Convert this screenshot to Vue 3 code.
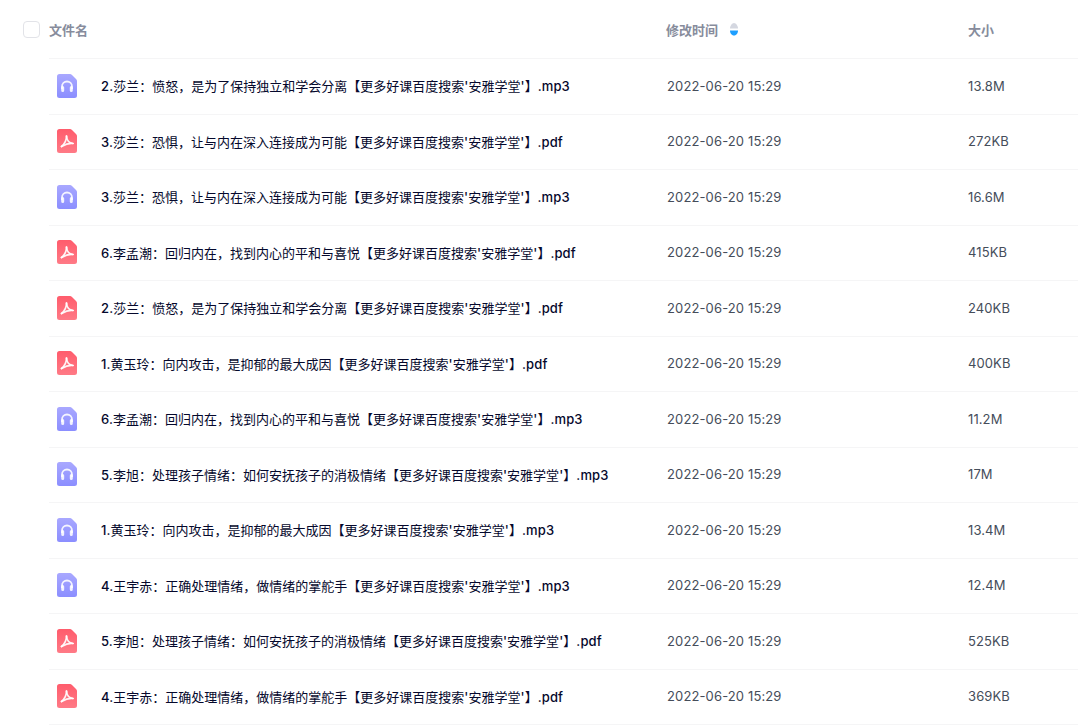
<script setup>
const rows = [
  ['2.莎兰：愤怒，是为了保持独立和学会分离【更多好课百度搜索\'安雅学堂\'】.mp3', '13.8M'],
  ['3.莎兰：恐惧，让与内在深入连接成为可能【更多好课百度搜索\'安雅学堂\'】.pdf', '272KB'],
  ['3.莎兰：恐惧，让与内在深入连接成为可能【更多好课百度搜索\'安雅学堂\'】.mp3', '16.6M'],
  ['6.李孟潮：回归内在，找到内心的平和与喜悦【更多好课百度搜索\'安雅学堂\'】.pdf', '415KB'],
  ['2.莎兰：愤怒，是为了保持独立和学会分离【更多好课百度搜索\'安雅学堂\'】.pdf', '240KB'],
  ['1.黄玉玲：向内攻击，是抑郁的最大成因【更多好课百度搜索\'安雅学堂\'】.pdf', '400KB'],
  ['6.李孟潮：回归内在，找到内心的平和与喜悦【更多好课百度搜索\'安雅学堂\'】.mp3', '11.2M'],
  ['5.李旭：处理孩子情绪：如何安抚孩子的消极情绪【更多好课百度搜索\'安雅学堂\'】.mp3', '17M'],
  ['1.黄玉玲：向内攻击，是抑郁的最大成因【更多好课百度搜索\'安雅学堂\'】.mp3', '13.4M'],
  ['4.王宇赤：正确处理情绪，做情绪的掌舵手【更多好课百度搜索\'安雅学堂\'】.mp3', '12.4M'],
  ['5.李旭：处理孩子情绪：如何安抚孩子的消极情绪【更多好课百度搜索\'安雅学堂\'】.pdf', '525KB'],
  ['4.王宇赤：正确处理情绪，做情绪的掌舵手【更多好课百度搜索\'安雅学堂\'】.pdf', '369KB'],
].map(([name, size]) => ({
  name,
  size,
  pdf: name.endsWith('.pdf'),
  runs: name.match(/[\x00-\x7f]+|[^\x00-\x7f]+/g).map((t) => ({ t, latin: /^[\x00-\x7f]/.test(t) })),
}))
</script>

<template>
  <div class="page">
    <svg class="defs" width="0" height="0">
      <defs>
        <linearGradient id="gp" x1="0" y1="0" x2="0" y2="1">
          <stop offset="0" stop-color="#ff5c6c" />
          <stop offset="1" stop-color="#ff7a86" />
        </linearGradient>
        <linearGradient id="ga" x1="0" y1="0" x2="0" y2="1">
          <stop offset="0" stop-color="#a9a8ff" />
          <stop offset="1" stop-color="#8b8eff" />
        </linearGradient>
      </defs>
    </svg>
    <div class="header">
      <span class="check"></span>
      <span class="h-name">文件名</span>
      <span class="h-time">修改时间
        <svg class="sort" width="8" height="13" viewBox="0 0 8 13">
          <path d="M0 5.500 C0 3 2 0 4 0 C6 0 8 3 8 5.500 Z" fill="#d4d7e0" />
          <path d="M0 7.500 H8 C8 10 6.500 12.500 4 12.500 C1.500 12.500 0 10 0 7.500 Z" fill="#1e9fff" />
        </svg>
      </span>
      <span class="h-size">大小</span>
    </div>
    <div v-for="(r, i) in rows" :key="i" class="row">
      <svg class="icon" width="20" height="24" viewBox="0 0 20 24">
        <path d="M2.500 0 H13 Q14 0 15 1 L19 5 Q20 6 20 7 V21.500 A2.500 2.500 0 0 1 17.500 24 H2.500 A2.500 2.500 0 0 1 0 21.500 V2.500 A2.500 2.500 0 0 1 2.500 0 Z" :fill="r.pdf ? 'url(#gp)' : 'url(#ga)'" />
        <g v-if="r.pdf" fill="none" stroke="#fff" stroke-opacity="0.92" stroke-width="1.700" stroke-linecap="round" stroke-linejoin="round">
          <path d="M9.500 7 C9.800 11 11.500 14 16 14.500" />
          <path d="M16 14.500 C12 14 8 15.500 4.500 17.500" />
          <path d="M9.500 7 C9.500 11 7.500 15 4.500 17.500" />
        </g>
        <g v-else fill="none" stroke="#fff" stroke-opacity="0.88">
          <path d="M5 15 V12.500 A5 5 0 0 1 15 12.500 V15" stroke-width="1.800" />
          <path d="M5.700 13.500 V16.500 M14.300 13.500 V16.500" stroke-width="3" stroke-linecap="round" />
        </g>
      </svg>
      <span class="name"><span v-for="(s, j) in r.runs" :key="j" :class="{ latin: s.latin }">{{ s.t }}</span></span>
      <span class="time">2022-06-20 15:29</span>
      <span class="size">{{ r.size }}</span>
    </div>
  </div>
</template>

<style scoped>
.page {
  width: 1078px;
  height: 727px;
  overflow: hidden;
  background: #fff;
  font-family: Inter, "Noto Sans CJK SC", sans-serif;
  font-size: 13px;
}
.defs { position: absolute; }
.header {
  height: 58px;
  display: flex;
  align-items: center;
  padding-left: 23px;
  color: #878c9c;
  font-weight: 700;
  box-sizing: border-box;
}
.check {
  width: 15px;
  height: 15px;
  border: 1px solid #e2e3e8;
  border-radius: 4px;
  margin-right: 9px;
  flex: none;
}
.h-name { width: 617px; flex: none; }
.h-time { width: 302px; flex: none; display: flex; align-items: center; }
.sort { margin-left: 12px; }
.row {
  height: 55.5px;
  display: flex;
  align-items: center;
  position: relative;
  padding-left: 57px;
  box-sizing: border-box;
}
.row::after {
  content: "";
  position: absolute;
  left: 49px;
  right: 0;
  top: 0;
  height: 1px;
  background: #f5f5f6;
}
.row:last-child::before {
  content: "";
  position: absolute;
  left: 49px;
  right: 0;
  bottom: -1px;
  height: 1px;
  background: #f5f5f6;
}
.icon { flex: none; margin-right: 24px; }
.name {
  width: 566px;
  flex: none;
  color: #05082c;
  font-weight: 400;
  white-space: nowrap;
  padding-bottom: 0.5px;
}
.latin { font-weight: 500; letter-spacing: 0.12px; }
.time { width: 301px; flex: none; color: #454d5a; letter-spacing: 0.13px; padding-bottom: 0.5px; }
.size { color: #454d5a; letter-spacing: 0.1px; }
</style>
